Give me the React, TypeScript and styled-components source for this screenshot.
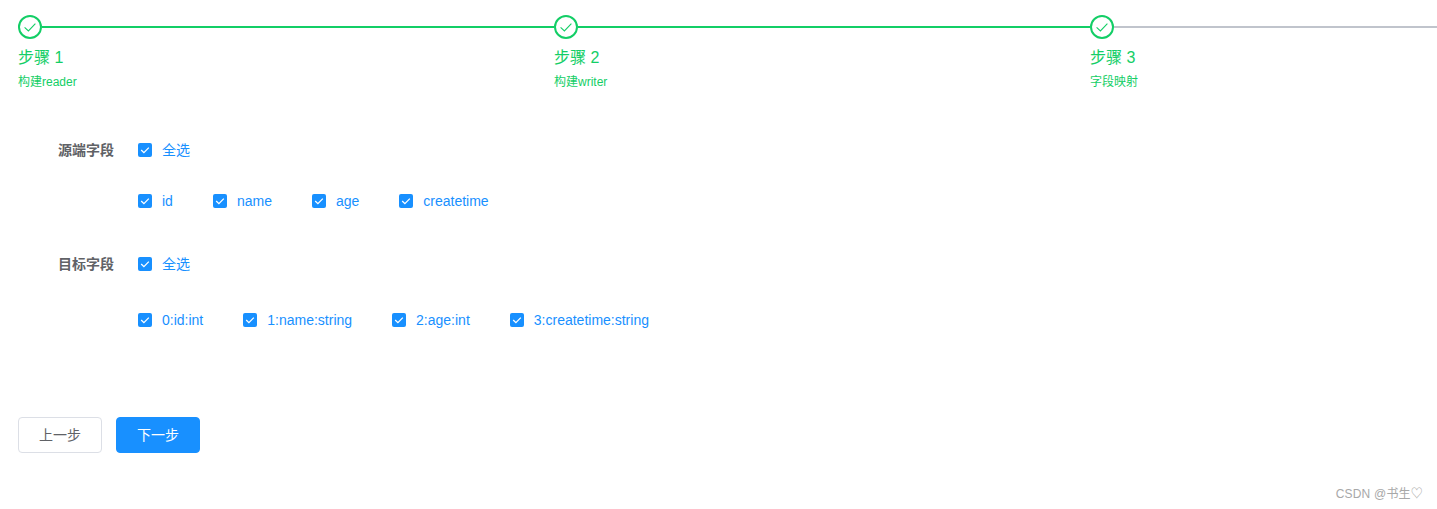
import React from "react";
import styled, { createGlobalStyle } from "styled-components";

const Global = createGlobalStyle`
  html, body { margin: 0; padding: 0; background: #fff; }
  body { font-family: "Liberation Sans", "Noto Sans CJK SC", sans-serif; }
`;

const Page = styled.div`
  position: relative;
  width: 1437px;
  height: 509px;
  overflow: hidden;
  box-sizing: border-box;
  padding: 15px 0 0 18px;
`;

const Steps = styled.div`
  display: grid;
  grid-template-columns: 536px 536px 1fr;
`;

const Step = styled.div`
  display: flex;
  flex-direction: column;
`;

const StepHead = styled.div`
  display: flex;
  align-items: center;
  height: 24px;
`;

const StepCircle = styled.div`
  box-sizing: border-box;
  width: 24px;
  height: 24px;
  flex: none;
  border: 2px solid #13ce66;
  border-radius: 50%;
  display: flex;
  align-items: center;
  justify-content: center;
`;

const StepLine = styled.div<{ $active: boolean }>`
  flex: 1;
  height: 2px;
  background: ${(p) => (p.$active ? "#13ce66" : "#c0c4cc")};
`;

const StepTitle = styled.div`
  margin-top: 7px;
  font-size: 16px;
  line-height: 24px;
  color: #13ce66;
`;

const StepDesc = styled.div`
  margin-top: 2px;
  font-size: 12px;
  line-height: 20px;
  color: #13ce66;
`;

const Form = styled.div`
  display: flex;
  flex-direction: column;
  margin-top: 40px;
`;

const FormRow = styled.div<{ $gap?: number }>`
  display: flex;
  align-items: center;
  height: 36px;
  margin-bottom: ${(p) => p.$gap ?? 0}px;
`;

const LabelSpacer = styled.div`
  width: 120px;
  flex: none;
`;

const FieldLabel = styled.div`
  width: 96px;
  flex: none;
  margin-right: 24px;
  text-align: right;
  font-size: 14px;
  line-height: 20px;
  font-weight: 700;
  color: #606266;
`;

const Group = styled.div`
  display: flex;
  align-items: center;
  gap: 40px;
`;

const Check = styled.label`
  display: inline-flex;
  align-items: center;
  font-size: 14px;
  line-height: 20px;
  color: #1890ff;
  white-space: nowrap;
`;

const Box = styled.span`
  width: 14px;
  height: 14px;
  flex: none;
  border-radius: 2px;
  background: #1890ff;
  margin-right: 10px;
  display: flex;
  align-items: center;
  justify-content: center;
`;

const Actions = styled.div`
  display: flex;
  gap: 14px;
  margin-top: 79px;
`;

const Button = styled.button<{ $primary?: boolean }>`
  box-sizing: border-box;
  width: 84px;
  height: 36px;
  padding: 0 0 2px;
  font-family: inherit;
  font-size: 14px;
  border-radius: 4px;
  border: 1px solid ${(p) => (p.$primary ? "#1890ff" : "#dcdfe6")};
  background: ${(p) => (p.$primary ? "#1890ff" : "#fff")};
  color: ${(p) => (p.$primary ? "#fff" : "#606266")};
`;

const Watermark = styled.div`
  position: absolute;
  right: 14px;
  top: 486px;
  font-size: 12px;
  line-height: 16px;
  letter-spacing: 0.2px;
  color: #a8a8a8;
  white-space: nowrap;
`;

const Tick = () => (
  <svg width="14" height="14" viewBox="0 0 14 14" fill="none">
    <path d="M3.2 7 L5.9 9.6 L10.8 4.6" stroke="#fff" strokeWidth="1.3" />
  </svg>
);

const CircleTick = () => (
  <svg width="14" height="14" viewBox="0 0 14 14" fill="none">
    <path d="M1.6 7.4 L5.4 11 L12.4 3.6" stroke="#13ce66" strokeWidth="1.1" />
  </svg>
);

const Item = ({ text }: { text: string }) => (
  <Check>
    <Box>
      <Tick />
    </Box>
    {text}
  </Check>
);

const steps = [
  { title: "步骤 1", desc: "构建reader", active: true },
  { title: "步骤 2", desc: "构建writer", active: true },
  { title: "步骤 3", desc: "字段映射", active: false },
];

export default function App() {
  return (
    <Page>
      <Global />
      <Steps>
        {steps.map((s) => (
          <Step key={s.title}>
            <StepHead>
              <StepCircle>
                <CircleTick />
              </StepCircle>
              <StepLine $active={s.active} />
            </StepHead>
            <StepTitle>{s.title}</StepTitle>
            <StepDesc>{s.desc}</StepDesc>
          </Step>
        ))}
      </Steps>
      <Form>
        <FormRow $gap={15}>
          <FieldLabel>源端字段</FieldLabel>
          <Item text="全选" />
        </FormRow>
        <FormRow $gap={27}>
          <LabelSpacer />
          <Group>
            {["id", "name", "age", "createtime"].map((t) => (
              <Item key={t} text={t} />
            ))}
          </Group>
        </FormRow>
        <FormRow $gap={20}>
          <FieldLabel>目标字段</FieldLabel>
          <Item text="全选" />
        </FormRow>
        <FormRow>
          <LabelSpacer />
          <Group>
            {["0:id:int", "1:name:string", "2:age:int", "3:createtime:string"].map((t) => (
              <Item key={t} text={t} />
            ))}
          </Group>
        </FormRow>
      </Form>
      <Actions>
        <Button>上一步</Button>
        <Button $primary>下一步</Button>
      </Actions>
      <Watermark>CSDN @书生♡</Watermark>
    </Page>
  );
}
